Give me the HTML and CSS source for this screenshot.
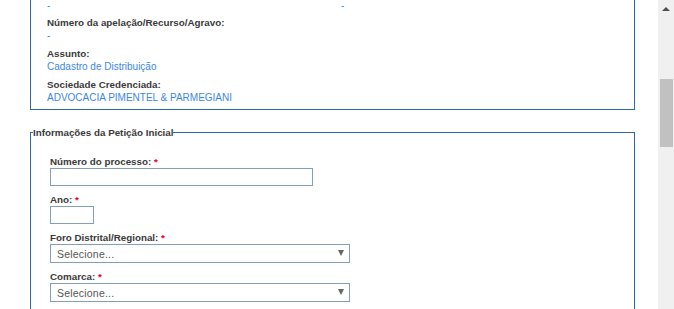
FILE: index.html
```html
<!DOCTYPE html>
<html lang="pt-BR">
<head>
    <meta charset="UTF-8">
    <meta name="viewport" content="width=device-width, initial-scale=1.0">
    <title>Petição Inicial</title>
    <link rel="stylesheet" href="styles.css">
</head>
<body>
    <div class="window">
        <div class="page">
            <div class="summary">
                <div class="group two-cols">
                    <span class="value">-</span>
                    <span class="value">-</span>
                </div>
                <div class="group">
                    <div class="label">Número da apelação/Recurso/Agravo:</div>
                    <div class="value">-</div>
                </div>
                <div class="group">
                    <div class="label">Assunto:</div>
                    <div class="value">Cadastro de Distribuição</div>
                </div>
                <div class="group">
                    <div class="label">Sociedade Credenciada:</div>
                    <div class="value">ADVOCACIA PIMENTEL &amp; PARMEGIANI</div>
                </div>
            </div>

            <fieldset class="section">
                <legend>Informações da Petição Inicial</legend>

                <div class="fields">
                    <div class="field">
                        <label for="numProcesso">Número do processo: <span class="req">*</span></label>
                        <input type="text" id="numProcesso" class="input-processo">
                    </div>

                    <div class="field">
                        <label for="ano">Ano: <span class="req">*</span></label>
                        <input type="text" id="ano" class="input-ano">
                    </div>

                    <div class="field">
                        <label>Foro Distrital/Regional: <span class="req">*</span></label>
                        <div class="select">
                            <span>Selecione...</span>
                            <span class="arrow"></span>
                        </div>
                    </div>

                    <div class="field">
                        <label>Comarca: <span class="req">*</span></label>
                        <div class="select">
                            <span>Selecione...</span>
                            <span class="arrow"></span>
                        </div>
                    </div>
                </div>
            </fieldset>
        </div>

        <!-- fake page scrollbar -->
        <div class="scrollbar">
            <div class="scroll-up"></div>
            <div class="scroll-thumb"></div>
        </div>
    </div>
</body>
</html>
```

FILE: styles.css
```css
html, body {
    margin: 0;
    padding: 0;
    height: 100%;
    overflow: hidden;
    background: #fff;
}
body {
    font-family: "Liberation Sans", Arial, sans-serif;
    font-size: 10px;
    color: #3a3a3a;
}
.window {
    display: flex;
    height: 309px;
}
.page {
    flex: 1;
    padding: 0 23px 0 30px;
}
.summary {
    border: 1px solid #2d6aa3;
    border-top: none;
    padding: 0 16px 0 16px;
}
.group {
    margin-bottom: 5px;
    line-height: 13px;
}
.two-cols {
    display: grid;
    grid-template-columns: 294px 1fr;
    line-height: 11px;
}
.label {
    font-weight: bold;
    font-size: 9.8px;
    color: #3a3a3a;
}
.value {
    color: #3b87e8;
    font-size: 10px;
}
.section {
    margin: 16px 0 0 0;
    border: 1px solid #2d6aa3;
    padding: 16px 19px 10px 2px;
    min-height: 200px;
}
.section legend {
    padding: 0;
    font-weight: bold;
    font-size: 9.8px;
    color: #3a3a3a;
    line-height: 13px;
}
.fields {
    padding-left: 17px;
}
.field {
    margin-bottom: 7px;
}
.field label {
    display: block;
    font-weight: bold;
    font-size: 9.8px;
    line-height: 13px;
    color: #3a3a3a;
}
.req {
    color: #e8001c;
}
input {
    display: block;
    box-sizing: border-box;
    height: 18px;
    border: 1px solid #829fbd;
    margin: 0;
    padding: 0 4px;
    font-family: inherit;
    font-size: 10px;
}
.input-processo {
    width: 263px;
}
.input-ano {
    width: 44px;
}
.select {
    box-sizing: border-box;
    width: 300px;
    height: 19px;
    border: 1px solid #829fbd;
    display: flex;
    align-items: center;
    justify-content: space-between;
    padding: 0 5px 0 6px;
    color: #555;
    font-size: 10.5px;
    letter-spacing: 0.2px;
}
.arrow {
    width: 0;
    height: 0;
    border-left: 3.5px solid transparent;
    border-right: 3.5px solid transparent;
    border-top: 6px solid #666;
    margin-bottom: 1px;
}
.scrollbar {
    width: 16px;
    background: #f0f0f0;
    display: flex;
    flex-direction: column;
    align-items: center;
}
.scroll-up {
    width: 0;
    height: 0;
    margin-top: 7px;
    border-left: 4px solid transparent;
    border-right: 4px solid transparent;
    border-bottom: 4px solid #505050;
}
.scroll-thumb {
    margin-top: 68px;
    width: 13px;
    height: 68px;
    background: #c1c1c1;
}
```
